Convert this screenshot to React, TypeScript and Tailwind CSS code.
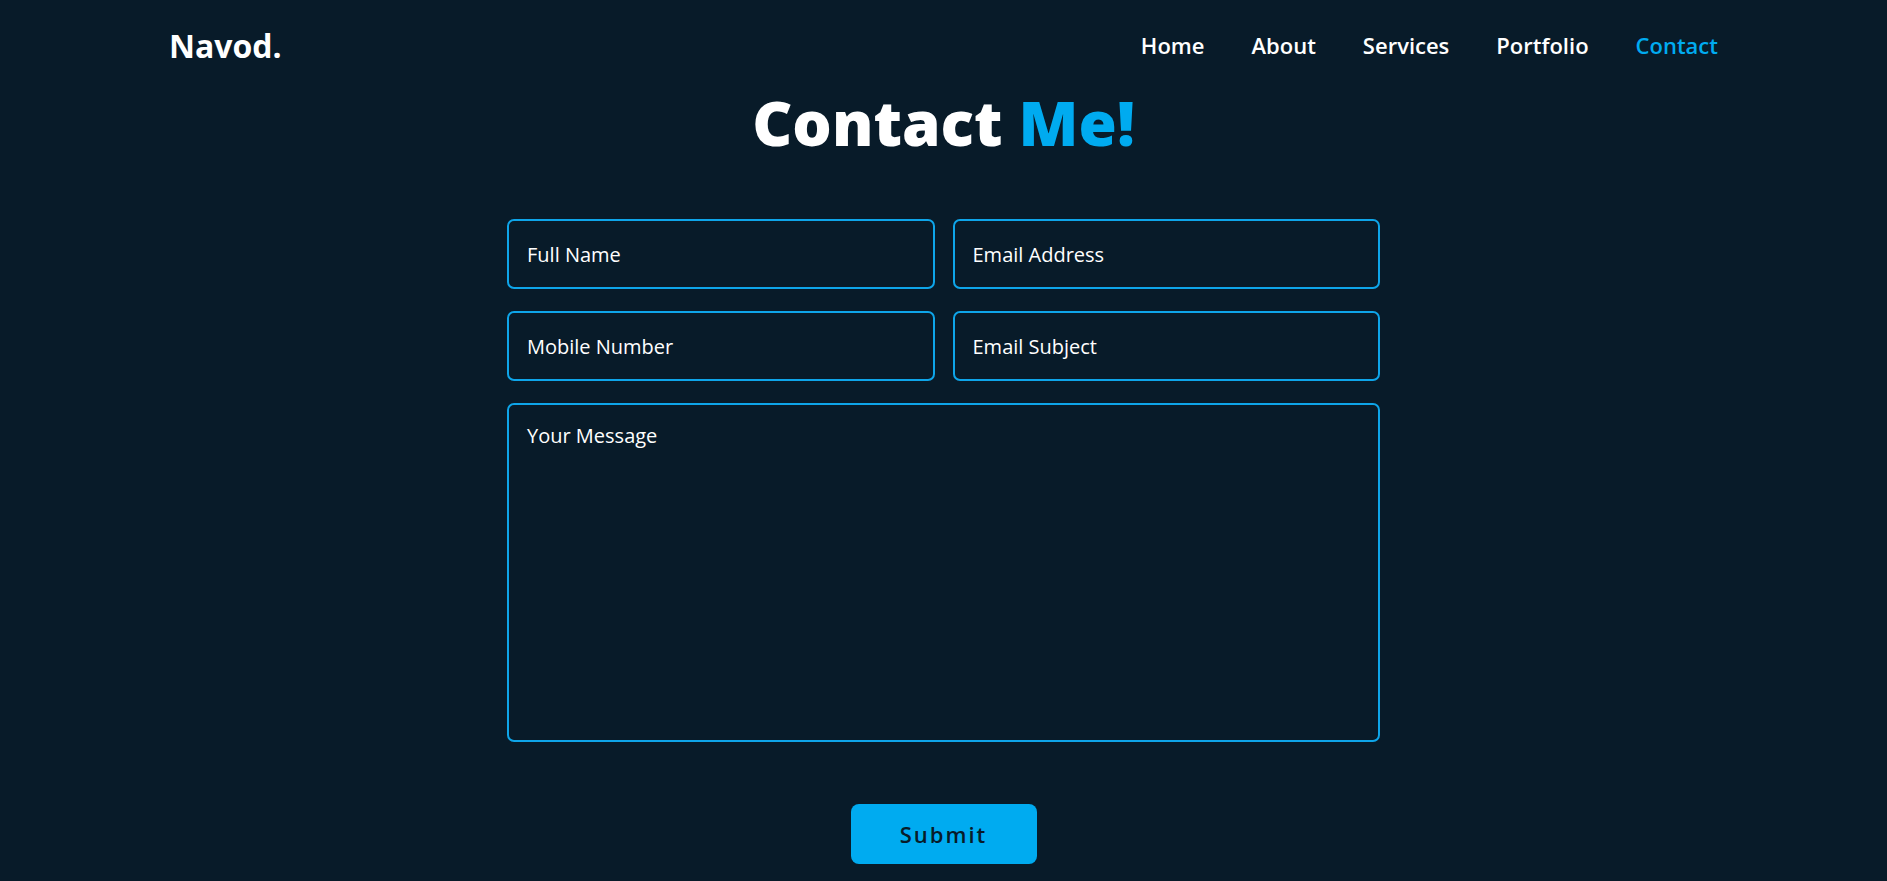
import React from "react";

const links = ["Home", "About", "Services", "Portfolio", "Contact"];

const field =
  "h-[70px] rounded-[7px] border-2 border-[#0ea5e9] bg-transparent px-[18px] text-[20px] text-white outline-none placeholder:text-white";

export default function App() {
  return (
    <div className="min-h-screen bg-[#081b29] font-['Open_Sans',sans-serif] text-white">
      <header className="flex h-[91px] items-center justify-between px-[169px]">
        <a href="#" className="text-[32px] font-bold">
          Navod.
        </a>
        <nav className="flex gap-[47px] text-[22px] font-semibold">
          {links.map((l) => (
            <a
              key={l}
              href="#"
              className={l === "Contact" ? "text-[#00abf0]" : "text-white"}
            >
              {l}
            </a>
          ))}
        </nav>
      </header>

      <section className="flex flex-col items-center pb-[18px]">
        <h2 className="text-[62px] font-extrabold leading-none">
          Contact <span className="text-[#00abf0]">Me!</span>
        </h2>

        <form className="mt-[66px] w-[873px]" onSubmit={(e) => e.preventDefault()}>
          <div className="grid grid-cols-2 gap-x-[18px] gap-y-[22px]">
            <input type="text" placeholder="Full Name" className={field} />
            <input type="email" placeholder="Email Address" className={field} />
            <input type="text" placeholder="Mobile Number" className={field} />
            <input type="text" placeholder="Email Subject" className={field} />
          </div>
          <textarea
            placeholder="Your Message"
            className="mt-[22px] block h-[339px] w-full resize-none rounded-[7px] border-2 border-[#0ea5e9] bg-transparent px-[18px] py-[16px] text-[20px] text-white outline-none placeholder:text-white"
          />
          <div className="mt-[62px] flex justify-center">
            <button
              type="submit"
              className="h-[60px] w-[186px] rounded-[8px] bg-[#00abf0] text-[22px] font-semibold tracking-[2px] text-[#081b29]"
            >
              Submit
            </button>
          </div>
        </form>
      </section>
    </div>
  );
}
